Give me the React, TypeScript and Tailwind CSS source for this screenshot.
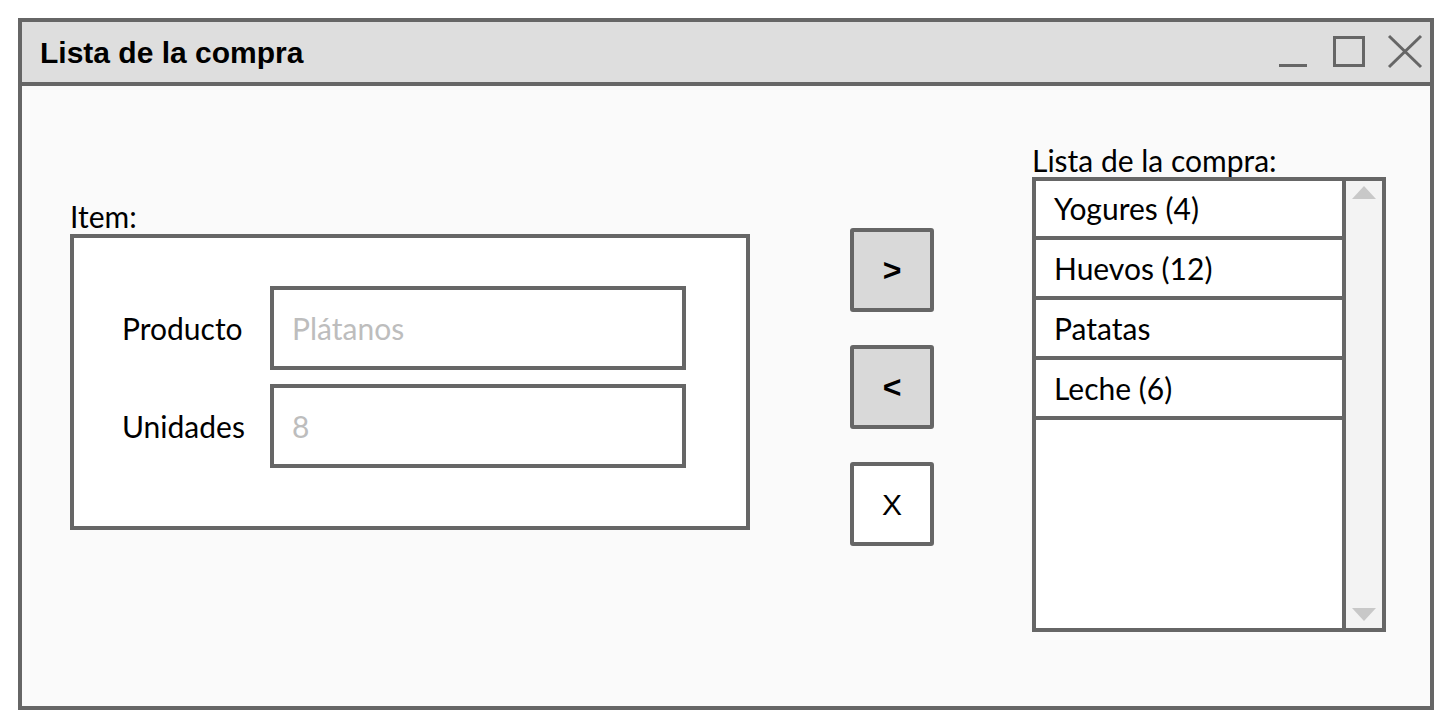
import React from "react";

const items = ["Yogures (4)", "Huevos (12)", "Patatas", "Leche (6)"];

const fields = [
  { label: "Producto", placeholder: "Plátanos" },
  { label: "Unidades", placeholder: "8" },
];

function WindowControls() {
  return (
    <svg width="152" height="60" viewBox="0 0 152 60" fill="none" stroke="#666666">
      <line x1="5" y1="43.5" x2="33" y2="43.5" strokeWidth="3" />
      <rect x="60.5" y="15.5" width="29" height="28" strokeWidth="3" />
      <line x1="115" y1="14" x2="147" y2="45" strokeWidth="3" />
      <line x1="147" y1="14" x2="115" y2="45" strokeWidth="3" />
    </svg>
  );
}

export default function App() {
  return (
    <div className="min-h-screen bg-white pl-[18px] pt-[18px]">
      <div className="w-[1416px] h-[692px] border-4 border-[#666666] bg-[#fafafa] flex flex-col">
        {/* title bar */}
        <div className="h-[64px] shrink-0 bg-[#dedede] border-b-4 border-[#666666] flex items-center justify-between pl-[18px] pr-[4px]">
          <span className="font-['Liberation_Sans',Arial,sans-serif] font-bold text-[30px] text-black">
            Lista de la compra
          </span>
          <WindowControls />
        </div>

        <div className="flex-1 flex items-start pl-[48px] font-['Lato',sans-serif] text-black">
          {/* item form */}
          <div className="pt-[113px] w-[680px]">
            <div className="text-[30px] leading-[35px]">Item:</div>
            <div className="h-[296px] border-4 border-[#666666] bg-white pt-[48px] pl-[48px]">
              <div className="grid grid-cols-[148px_416px] gap-y-[14px]">
                {fields.map((f) => (
                  <React.Fragment key={f.label}>
                    <div className="flex items-center text-[30px]">{f.label}</div>
                    <div className="h-[84px] border-4 border-[#666666] bg-white flex items-center pl-[18px] text-[30px] text-[#bdbdbd]">
                      {f.placeholder}
                    </div>
                  </React.Fragment>
                ))}
              </div>
            </div>
          </div>

          {/* move buttons */}
          <div className="ml-[100px] pt-[142px] flex flex-col gap-[33px] font-['Liberation_Sans',Arial,sans-serif]">
            <button className="w-[84px] h-[84px] border-4 border-[#666666] rounded-[3px] bg-[#d9d9d9] flex items-center justify-center font-bold text-[32px]">
              &gt;
            </button>
            <button className="w-[84px] h-[84px] border-4 border-[#666666] rounded-[3px] bg-[#d9d9d9] flex items-center justify-center font-bold text-[32px]">
              &lt;
            </button>
            <button className="w-[84px] h-[84px] border-4 border-[#666666] rounded-[3px] bg-white flex items-center justify-center text-[30px]">
              X
            </button>
          </div>

          {/* shopping list */}
          <div className="ml-[98px] pt-[57px]">
            <div className="text-[30px] leading-[34px]">Lista de la compra:</div>
            <div className="w-[354px] h-[455px] border-4 border-[#666666] bg-white flex">
              <div className="flex-1 flex flex-col">
                {items.map((it, i) => (
                  <div
                    key={it}
                    className={`${i === 0 ? "h-[59px]" : "h-[60px]"} shrink-0 border-b-4 border-[#666666] flex items-center pl-[18px] text-[30px]`}
                  >
                    {it}
                  </div>
                ))}
              </div>
              <div className="w-[40px] border-l-4 border-[#666666] bg-[#f3f3f3] flex flex-col items-center justify-between pt-[5px] pb-[7px]">
                <svg width="24" height="13" viewBox="0 0 24 13">
                  <polygon points="12,0 24,13 0,13" fill="#c8c8c8" />
                </svg>
                <svg width="24" height="13" viewBox="0 0 24 13">
                  <polygon points="0,0 24,0 12,13" fill="#c8c8c8" />
                </svg>
              </div>
            </div>
          </div>
        </div>
      </div>
    </div>
  );
}
